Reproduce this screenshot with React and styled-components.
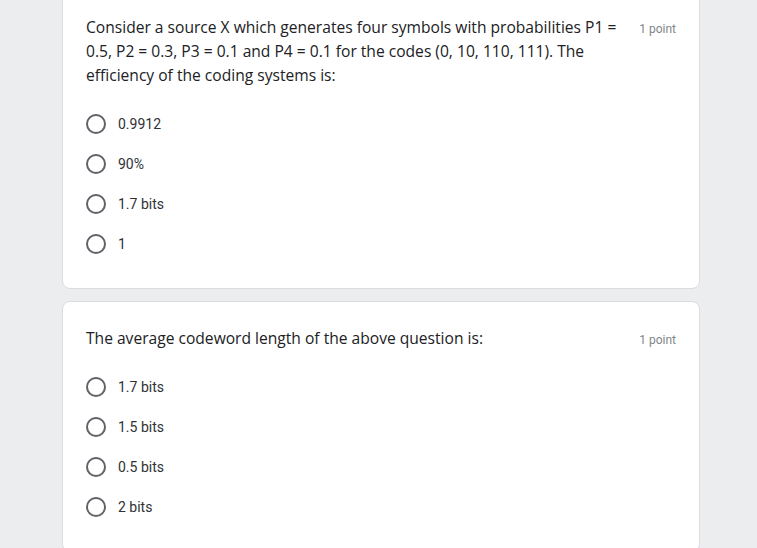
import React from 'react'
import styled, { createGlobalStyle } from 'styled-components'

const GlobalStyle = createGlobalStyle`
  html, body {
    margin: 0;
    padding: 0;
    background: #ebedef;
  }
  body {
    font-family: Roboto, "Liberation Sans", Arial, sans-serif;
    overflow: hidden;
  }
`

const questions = [
  {
    id: 'q1',
    title:
      'Consider a source X which generates four symbols with probabilities P1 = 0.5, P2 = 0.3, P3 = 0.1 and P4 = 0.1 for the codes (0, 10, 110, 111). The efficiency of the coding systems is:',
    points: '1 point',
    options: ['0.9912', '90%', '1.7 bits', '1'],
  },
  {
    id: 'q2',
    title: 'The average codeword length of the above question is:',
    points: '1 point',
    options: ['1.7 bits', '1.5 bits', '0.5 bits', '2 bits'],
  },
]

const Question = ({ title, points, options }) => (
  <Question.Card>
    <Question.Header>
      <Question.Title>{title}</Question.Title>
      <Question.Points>{points}</Question.Points>
    </Question.Header>
    <Question.Options>
      {options.map((option) => (
        <Question.Option key={option}>
          <Question.Radio />
          <Question.Label>{option}</Question.Label>
        </Question.Option>
      ))}
    </Question.Options>
  </Question.Card>
)

Question.Card = styled.div`
  background: #fff;
  border: 1px solid #dadce0;
  border-radius: 8px;
  padding: 24px 23px 24px 23px;
`
Question.Header = styled.div`
  display: flex;
  align-items: flex-start;
  justify-content: space-between;
  gap: 16px;
`
Question.Title = styled.div`
  width: 536px;
  font-family: "Open Sans", "Noto Sans", sans-serif;
  font-size: 15.6px;
  line-height: 24px;
  color: #202124;
`
Question.Points = styled.div`
  padding-top: 4px;
  font-size: 12px;
  line-height: 20px;
  color: #80868b;
  white-space: nowrap;
`
Question.Options = styled.div`
  display: flex;
  flex-direction: column;
  margin-top: 17px;
`
Question.Option = styled.div`
  display: flex;
  align-items: center;
  height: 40px;
  gap: 12px;
`
Question.Radio = styled.span`
  box-sizing: border-box;
  width: 20px;
  height: 20px;
  border: 2px solid #5f6368;
  border-radius: 50%;
  flex-shrink: 0;
`
Question.Label = styled.span`
  font-size: 14px;
  color: #303134;
`

const Page = styled.div`
  width: 638px;
  margin: -10px 0 0 62px;
  display: flex;
  flex-direction: column;
  gap: 12px;
`

export default function App() {
  return (
    <>
      <GlobalStyle />
      <Page>
        {questions.map((q) => (
          <Question key={q.id} {...q} />
        ))}
      </Page>
    </>
  )
}
